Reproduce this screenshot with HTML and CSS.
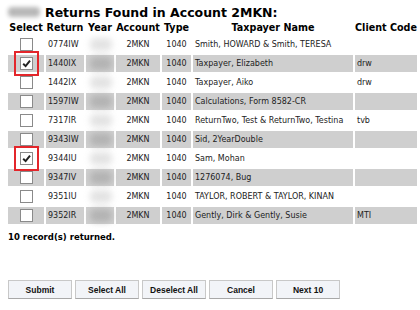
FILE: index.html
```html
<!DOCTYPE html>
<html lang="en">
<head>
  <meta charset="UTF-8" />
  <title>Returns Found</title>
  <link rel="stylesheet" href="styles.css">
</head>
<body>

<h1 class="title"><span class="blur-name"></span>Returns Found in Account 2MKN:</h1>

<table class="results">
  <thead>
    <tr>
      <th class="c-sel">Select</th>
      <th class="c-ret">Return</th>
      <th class="c-year">Year</th>
      <th class="c-acct">Account</th>
      <th class="c-type">Type</th>
      <th class="c-name">Taxpayer Name</th>
      <th class="c-code">Client Code</th>
    </tr>
  </thead>
  <tbody>
    <tr>
      <td class="c-sel"><span class="box"></span></td>
      <td>0774IW</td><td><span class="blur"></span></td><td class="center">2MKN</td><td class="center">1040</td>
      <td>Smith, HOWARD &amp; Smith, TERESA</td><td></td>
    </tr>
    <tr class="alt">
      <td class="c-sel"><span class="mark"><span class="box checked"><svg viewBox="0 0 10 10"><path d="M2 5.2 L4.2 7.4 L8.2 2.4" /></svg></span></span></td>
      <td>1440IX</td><td><span class="blur"></span></td><td class="center">2MKN</td><td class="center">1040</td>
      <td>Taxpayer, Elizabeth</td><td>drw</td>
    </tr>
    <tr>
      <td class="c-sel"><span class="box"></span></td>
      <td>1442IX</td><td><span class="blur"></span></td><td class="center">2MKN</td><td class="center">1040</td>
      <td>Taxpayer, Aiko</td><td>drw</td>
    </tr>
    <tr class="alt">
      <td class="c-sel"><span class="box"></span></td>
      <td>1597IW</td><td><span class="blur"></span></td><td class="center">2MKN</td><td class="center">1040</td>
      <td>Calculations, Form 8582-CR</td><td></td>
    </tr>
    <tr>
      <td class="c-sel"><span class="box"></span></td>
      <td>7317IR</td><td><span class="blur"></span></td><td class="center">2MKN</td><td class="center">1040</td>
      <td>ReturnTwo, Test &amp; ReturnTwo, Testina</td><td>tvb</td>
    </tr>
    <tr class="alt">
      <td class="c-sel"><span class="box"></span></td>
      <td>9343IW</td><td><span class="blur"></span></td><td class="center">2MKN</td><td class="center">1040</td>
      <td>Sid, 2YearDouble</td><td></td>
    </tr>
    <tr>
      <td class="c-sel"><span class="mark"><span class="box checked"><svg viewBox="0 0 10 10"><path d="M2 5.2 L4.2 7.4 L8.2 2.4" /></svg></span></span></td>
      <td>9344IU</td><td><span class="blur"></span></td><td class="center">2MKN</td><td class="center">1040</td>
      <td>Sam, Mohan</td><td></td>
    </tr>
    <tr class="alt">
      <td class="c-sel"><span class="box"></span></td>
      <td>9347IV</td><td><span class="blur"></span></td><td class="center">2MKN</td><td class="center">1040</td>
      <td>1276074, Bug</td><td></td>
    </tr>
    <tr>
      <td class="c-sel"><span class="box"></span></td>
      <td>9351IU</td><td><span class="blur"></span></td><td class="center">2MKN</td><td class="center">1040</td>
      <td>TAYLOR, ROBERT &amp; TAYLOR, KINAN</td><td></td>
    </tr>
    <tr class="alt">
      <td class="c-sel"><span class="box"></span></td>
      <td>9352IR</td><td><span class="blur"></span></td><td class="center">2MKN</td><td class="center">1040</td>
      <td>Gently, Dirk &amp; Gently, Susie</td><td>MTI</td>
    </tr>
  </tbody>
</table>

<p class="count">10 record(s) returned.</p>

<div class="actions">
  <button class="btn">Submit</button>
  <button class="btn">Select All</button>
  <button class="btn">Deselect All</button>
  <button class="btn">Cancel</button>
  <button class="btn">Next 10</button>
</div>

</body>
</html>
```

FILE: styles.css
```css
body {
  font-family: "DejaVu Sans", Verdana, sans-serif;
  background-color: #ffffff;
  color: #000;
  margin: 0;
  padding: 0 0 0 6px;
  overflow: hidden;
}

.title {
  display: flex;
  align-items: center;
  margin: 4px 0 0 2px;
  font-size: 12.5px;
  font-weight: bold;
  height: 16px;
}

.blur-name {
  display: inline-block;
  width: 32px;
  height: 10px;
  margin-right: 5px;
  background: #b8b8b8;
  border-radius: 4px;
  filter: blur(2px);
}

.results {
  border-collapse: separate;
  border-spacing: 2px;
  font-size: 8px;
  margin-top: -1px;
}

.results th {
  font-size: 9.6px;
  font-weight: bold;
  height: 13px;
  padding: 0;
  text-align: center;
}

.results td {
  height: 17px;
  padding: 0 0 0 2px;
  white-space: nowrap;
  color: #222;
}

.results tr.alt td {
  background-color: #cfcfcf;
}

.results td.center {
  text-align: center;
  padding: 0;
}

.c-sel { width: 36px; }
.c-ret { width: 38px; }
.c-year { width: 28px; }
.c-acct { width: 44px; }
.c-type { width: 29px; }
.c-name { width: 160px; }
.c-code { width: 62px; }

.results td.c-sel {
  text-align: center;
  padding: 0;
}

.box {
  display: inline-block;
  width: 11px;
  height: 11px;
  border: 1px solid #8a8a8a;
  background: #fff;
  vertical-align: middle;
}

.box svg {
  display: block;
  width: 11px;
  height: 11px;
}

.box svg path {
  fill: none;
  stroke: #222;
  stroke-width: 1.8;
}

.mark {
  display: inline-block;
  outline: 2px solid #e3262b;
  outline-offset: 4px;
  line-height: 0;
}

.blur {
  display: block;
  width: 22px;
  height: 13px;
  margin: 0 auto;
  background: #a8a8a8;
  border-radius: 5px;
  filter: blur(3px);
  opacity: 0.7;
}

.results tr:not(.alt) .blur {
  background: #d8d8d8;
}

.count {
  font-size: 8.5px;
  font-weight: bold;
  margin: 6px 0 0 2px;
}

.actions {
  display: flex;
  gap: 3px;
  margin: 38px 0 0 2px;
}

.btn {
  width: 64px;
  height: 19px;
  font-family: "Liberation Sans", Arial, sans-serif;
  font-size: 8.5px;
  font-weight: bold;
  background: #f2f4f8;
  border: 1px solid #c8c8c8;
  border-bottom-color: #a8a8a8;
  padding: 0;
  color: #111;
}
```
